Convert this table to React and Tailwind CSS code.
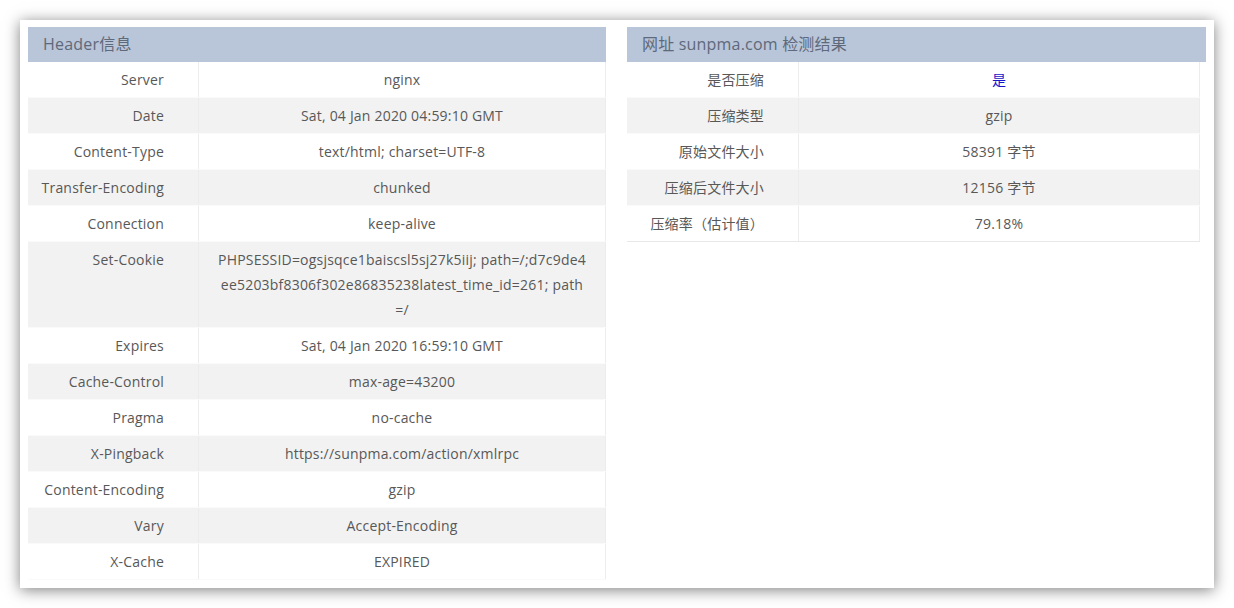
import React from "react";

const font = { fontFamily: '"Open Sans", "Noto Sans CJK SC", sans-serif' };

const leftRows = [
  ["Server", "nginx"],
  ["Date", "Sat, 04 Jan 2020 04:59:10 GMT"],
  ["Content-Type", "text/html; charset=UTF-8"],
  ["Transfer-Encoding", "chunked"],
  ["Connection", "keep-alive"],
  [
    "Set-Cookie",
    [
      "PHPSESSID=ogsjsqce1baiscsl5sj27k5iij; path=/;d7c9de4",
      "ee5203bf8306f302e86835238latest_time_id=261; path",
      "=/",
    ],
  ],
  ["Expires", "Sat, 04 Jan 2020 16:59:10 GMT"],
  ["Cache-Control", "max-age=43200"],
  ["Pragma", "no-cache"],
  ["X-Pingback", "https://sunpma.com/action/xmlrpc"],
  ["Content-Encoding", "gzip"],
  ["Vary", "Accept-Encoding"],
  ["X-Cache", "EXPIRED"],
];

const rightRows = [
  ["是否压缩", "是", true],
  ["压缩类型", "gzip"],
  ["原始文件大小", "58391 字节"],
  ["压缩后文件大小", "12156 字节"],
  ["压缩率（估计值）", "79.18%"],
];

function Row({ label, value, idx, labelW, blue, last }) {
  const bg = idx % 2 === 0 ? "bg-white" : "bg-[#f2f2f2]";
  return (
    <div
      className={`flex ${bg} ${last ? "border-b border-[#e8e8e8]" : "border-b border-[#fafafa]"}`}
    >
      <div
        className={`${labelW} shrink-0 text-right pr-[34px] py-[5px] leading-[25px] whitespace-nowrap border-r border-[#ececec]`}
      >
        {label}
      </div>
      <div
        className={`flex-1 text-center px-3 py-[5px] leading-[25px] border-r border-[#ececec] ${blue ? "text-[#1616c8]" : ""}`}
      >
        {Array.isArray(value)
          ? value.map((l, i) => (
              <span key={i} className="block whitespace-nowrap">
                {l}
              </span>
            ))
          : value}
      </div>
    </div>
  );
}

export default function App() {
  return (
    <div className="w-[1234px] h-[608px] bg-white pt-5 px-5" style={font}>
      <div className="w-[1194px] h-[568px] bg-white shadow-[0_2px_14px_rgba(0,0,0,0.5)] pt-[7px] px-2 flex gap-[21px] text-[14px] text-[#585858] tracking-[0.2px]">
        <div className="w-[578px]">
          <div className="h-[35px] bg-[#b9c5d8] text-[16px] text-[#5e697b] pl-[15px] leading-[35px]">
            Header信息
          </div>
          {leftRows.map((r, i) => (
            <Row key={i} label={r[0]} value={r[1]} idx={i} labelW="w-[171px]" />
          ))}
        </div>
        <div className="w-[579px]">
          <div className="h-[35px] bg-[#b9c5d8] text-[16px] text-[#5e697b] pl-[15px] leading-[35px]">
            网址 sunpma.com 检测结果
          </div>
          <div className="pr-[6px]">
            {rightRows.map((r, i) => (
              <Row
                key={i}
                label={r[0]}
                value={r[1]}
                blue={r[2]}
                idx={i}
                labelW="w-[172px]"
                last={i === rightRows.length - 1}
              />
            ))}
          </div>
        </div>
      </div>
    </div>
  );
}
